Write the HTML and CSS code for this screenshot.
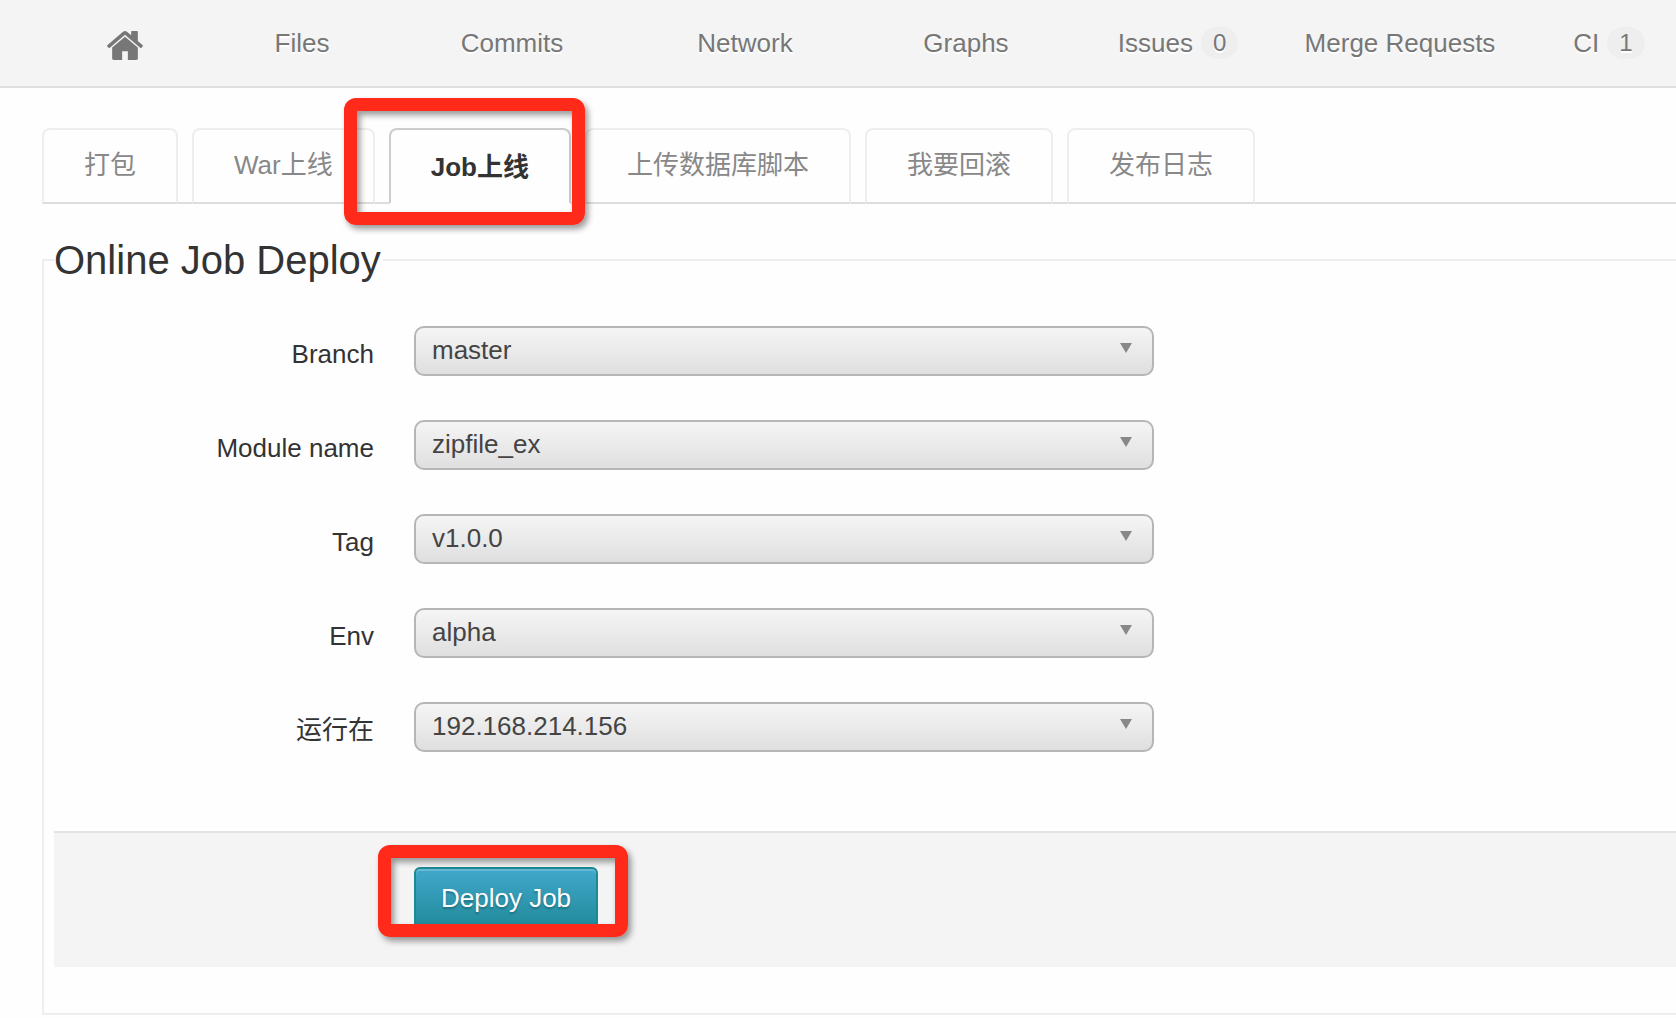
FILE: index.html
```html
<!DOCTYPE html>
<html lang="zh-CN">
<head>
<meta charset="utf-8">
<title>Online Job Deploy</title>
<link rel="stylesheet" href="styles.css">
</head>
<body>
<nav class="main-nav" aria-label="Project">
  <a class="nav-link" href="#" aria-label="Home">
    <svg class="home-icon" viewBox="89 253 1614 1283" preserveAspectRatio="none" aria-hidden="true"><path d="M1472 992v480q0 26-19 45t-45 19h-384v-384h-256v384h-384q-26 0-45-19t-19-45v-480q0-1 .5-3t.5-3l575-474 575 474q1 2 1 6zm223-69l-62 74q-8 9-21 11h-3q-13 0-21-7l-692-577-692 577q-12 8-24 7-13-2-21-11l-62-74q-8-10-7-23.5t11-21.5l719-599q32-26 76-26t76 26l200 167v-158q0-14 9-23t23-9h236q14 0 23 9t9 23v408l219 182q10 8 11 21.5t-7 23.5z"/></svg>
  </a>
  <a class="nav-link" href="#">Files</a>
  <a class="nav-link" href="#">Commits</a>
  <a class="nav-link" href="#">Network</a>
  <a class="nav-link" href="#">Graphs</a>
  <a class="nav-link" href="#">Issues <span class="badge">0</span></a>
  <a class="nav-link" href="#">Merge Requests</a>
  <a class="nav-link nav-link-last" href="#">CI <span class="badge">1</span></a>
</nav>

<main class="content">
  <ul class="tabs">
    <li class="tab"><a class="tab-link" href="#">打包</a></li>
    <li class="tab"><a class="tab-link" href="#">War上线</a></li>
    <li class="tab"><a class="tab-link active" href="#" aria-current="page">Job上线</a><span class="marker marker-tab"></span></li>
    <li class="tab"><a class="tab-link" href="#">上传数据库脚本</a></li>
    <li class="tab"><a class="tab-link" href="#">我要回滚</a></li>
    <li class="tab"><a class="tab-link" href="#">发布日志</a></li>
  </ul>

  <form>
    <fieldset class="deploy">
      <legend class="deploy-title">Online Job Deploy</legend>
      <div class="fields">
        <div class="field">
          <label class="field-label" for="branch">Branch</label>
          <div class="select-box"><select class="select" id="branch"><option>master</option></select></div>
        </div>
        <div class="field">
          <label class="field-label" for="module">Module name</label>
          <div class="select-box"><select class="select" id="module"><option>zipfile_ex</option></select></div>
        </div>
        <div class="field">
          <label class="field-label" for="tag">Tag</label>
          <div class="select-box"><select class="select" id="tag"><option>v1.0.0</option></select></div>
        </div>
        <div class="field">
          <label class="field-label" for="env">Env</label>
          <div class="select-box"><select class="select" id="env"><option>alpha</option></select></div>
        </div>
        <div class="field">
          <label class="field-label" for="host">运行在</label>
          <div class="select-box"><select class="select" id="host"><option>192.168.214.156</option></select></div>
        </div>
      </div>
      <div class="actions">
        <div class="action">
          <button class="deploy-button" type="submit">Deploy Job</button>
          <span class="marker marker-button"></span>
        </div>
      </div>
    </fieldset>
  </form>
</main>
</body>
</html>
```
FILE: styles.css
```css
* {
  box-sizing: border-box;
}

body {
  margin: 0;
  background: #fefefe;
  color: #333;
  font-family: "Liberation Sans", "Noto Sans CJK SC", sans-serif;
  font-size: 26px;
  line-height: 40px;
}

/* Top navigation */
.main-nav {
  display: grid;
  grid-template-columns: 166fr 188fr 232fr 234fr 208fr 216fr 228fr 162fr;
  height: 88px;
  padding-left: 42px;
  background: #f4f4f4;
  border-bottom: 2px solid #dedede;
}

.nav-link {
  display: flex;
  align-items: center;
  justify-content: center;
  gap: 8px;
  color: #777;
  text-decoration: none;
  text-shadow: 0 2px 0 #fff;
  white-space: nowrap;
}

.nav-link-last {
  padding-left: 28px;
}

.home-icon {
  width: 36px;
  height: 29px;
  margin-top: 4px;
  fill: #777;
}

.badge {
  padding: 0 12px;
  border-radius: 16px;
  background: #eee;
  font-size: 24px;
  line-height: 32px;
}

/* Tabs */
.content {
  padding: 40px 0 0 42px;
}

.tabs {
  display: flex;
  gap: 14px;
  margin: 0 0 16px;
  padding: 0;
  list-style: none;
  border-bottom: 2px solid #ddd;
}

.tab {
  position: relative;
  margin-bottom: -2px;
}

.tab-link {
  display: block;
  height: 76px;
  padding: 15px 40px;
  border: 2px solid #eee;
  border-bottom-color: #ddd;
  border-radius: 8px 8px 0 0;
  color: #888;
  text-decoration: none;
  white-space: nowrap;
}

.tab-link.active {
  padding-top: 17px;
  border-color: #ccc;
  border-bottom-color: #fefefe;
  background: #fefefe;
  color: #333;
  font-weight: bold;
}

/* Red highlight frames */
.marker {
  position: absolute;
  z-index: 1;
  border: 13px solid #ff2a1a;
  border-radius: 12px;
  box-shadow: 3px 4px 6px rgba(0, 0, 0, .4), inset 3px 4px 6px rgba(0, 0, 0, .4);
  pointer-events: none;
}

.marker-tab {
  top: -30px;
  right: -14px;
  bottom: -21px;
  left: -45px;
}

.marker-button {
  top: -22px;
  right: -30px;
  bottom: -8px;
  left: -36px;
}

/* Deploy form */
.deploy {
  min-width: 0;
  margin: 0;
  padding: 0 0 46px 10px;
  border: 2px solid #eee;
  border-right: 0;
}

.deploy-title {
  padding: 0 2px 0 0;
  font-size: 40px;
  line-height: 80px;
}

.fields {
  display: grid;
  gap: 44px;
  padding: 26px 0 79px;
}

.field {
  display: grid;
  grid-template-columns: 320px minmax(0, 740px);
  column-gap: 40px;
}

.field-label {
  padding-top: 8px;
  text-align: right;
}

.select-box {
  position: relative;
}

.select-box::after {
  content: "";
  position: absolute;
  top: 17px;
  right: 22px;
  width: 12px;
  height: 10px;
  background: #888;
  clip-path: polygon(0 0, 100% 0, 50% 100%);
  pointer-events: none;
}

.select {
  display: block;
  width: 100%;
  height: 50px;
  padding: 0 40px 2px 16px;
  border: 2px solid #b6b6b6;
  border-radius: 10px;
  background: linear-gradient(#f5f5f5, #dfdfdf);
  color: #444;
  font: inherit;
  appearance: none;
}

.actions {
  padding: 34px 0 38px 360px;
  border-top: 2px solid #e2e2e2;
  background: #f4f4f4;
}

.action {
  position: relative;
  width: max-content;
}

.deploy-button {
  display: block;
  height: 62px;
  padding: 0 25px;
  border: 2px solid #1c8a93;
  border-radius: 6px;
  background: linear-gradient(#41a8cc, #218a9a);
  box-shadow: inset 0 2px 0 rgba(255, 255, 255, .2);
  color: #fff;
  font: inherit;
  text-shadow: 0 2px 2px rgba(0, 0, 0, .25);
}
```
